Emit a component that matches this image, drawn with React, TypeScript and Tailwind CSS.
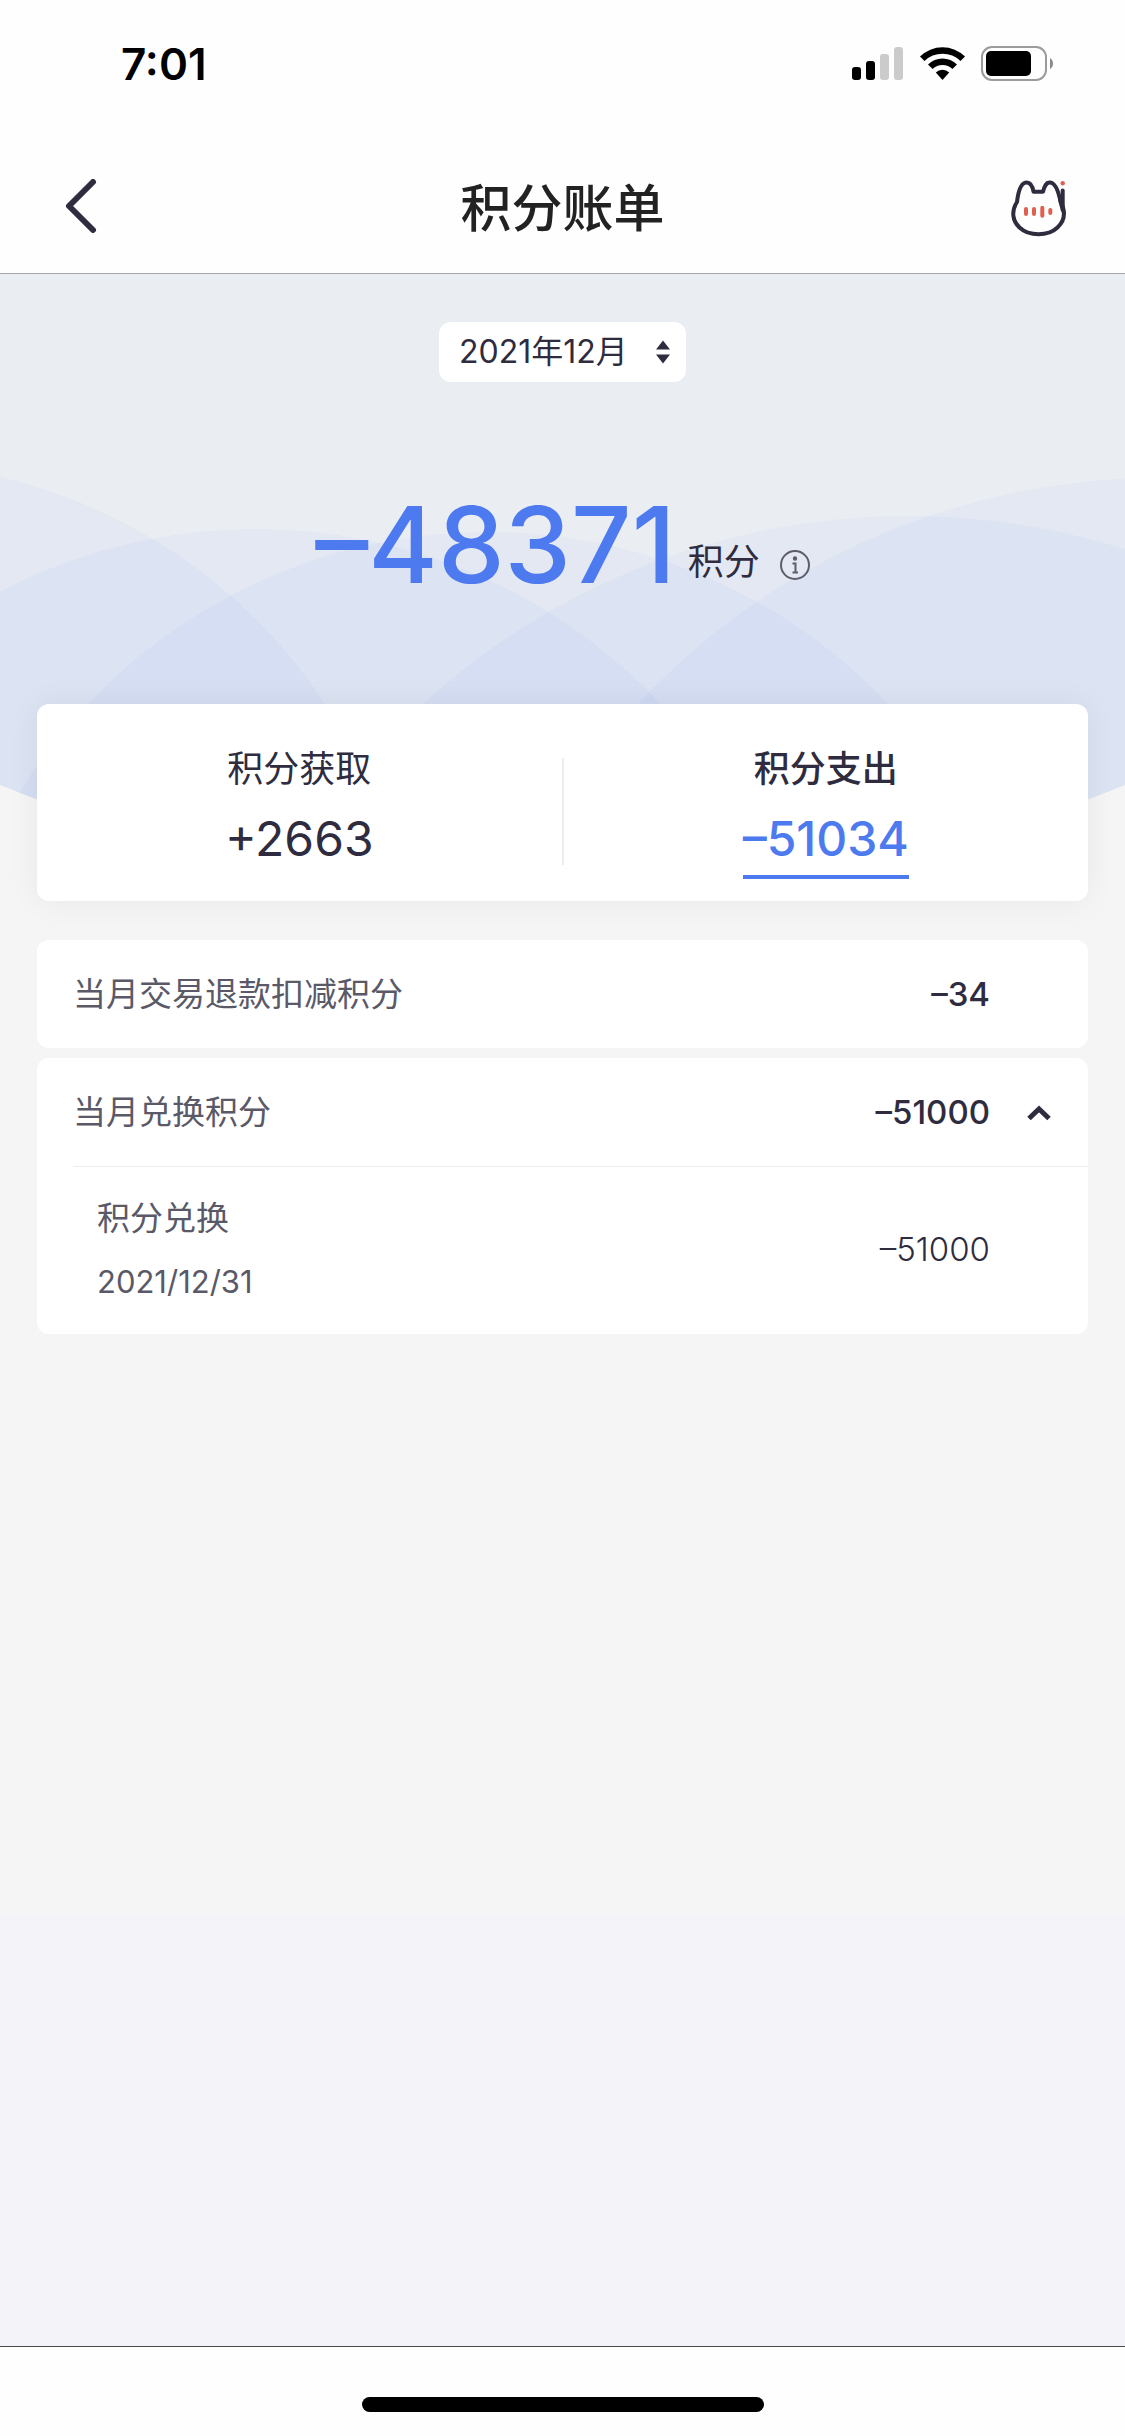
import { useState } from "react";

type Detail = {
  name: string;
  date: string;
  amount: string;
};

type Item = {
  title: string;
  amount: string;
  details: Detail[];
};

const items: Item[] = [
  {
    title: "当月交易退款扣减积分",
    amount: "–34",
    details: [],
  },
  {
    title: "当月兑换积分",
    amount: "–51000",
    details: [
      { name: "积分兑换", date: "2021/12/31", amount: "–51000" },
    ],
  },
];

const tabs = [
  { id: "earn", label: "积分获取", value: "+2663" },
  { id: "spend", label: "积分支出", value: "–51034" },
];

function StatusIcons() {
  return (
    <svg
      className="h-9 w-[202px]"
      viewBox="0 0 202 36"
      aria-hidden="true"
    >
      {/* signal */}
      <rect x="0" y="21" width="9" height="13" rx="3" />
      <rect x="14" y="15" width="9" height="19" rx="3" />
      <rect x="28" y="8" width="9" height="26" rx="3" fill="#cbcbcb" />
      <rect x="42" y="1" width="9" height="33" rx="3" fill="#cbcbcb" />

      {/* wifi */}
      <path d="M68 10.5a32 32 0 0 1 45 0l-4.5 4.6a25.5 25.5 0 0 0-36 0z" />
      <path d="M76 18.5a20.5 20.5 0 0 1 29 0l-4.6 4.6a14 14 0 0 0-19.8 0z" />
      <path d="M83.8 26.6a9.5 9.5 0 0 1 13.4 0L90.500 34z" />

      {/* battery */}
      <rect
        x="130"
        y="1"
        width="64"
        height="33"
        rx="10"
        fill="none"
        stroke="#9b9b9b"
        strokeWidth="2"
      />
      <rect x="134" y="5" width="45" height="25" rx="5" />
      <path d="M198 12q3 2 3 5.500t-3 5.500z" fill="#8a8a8a" />
    </svg>
  );
}

function CatIcon() {
  return (
    <svg
      className="h-[60px] w-[60px]"
      viewBox="0 0 60 60"
      fill="none"
      strokeLinecap="round"
      strokeLinejoin="round"
      aria-hidden="true"
    >
      <path
        d="M7 23C8.500 10 12 3.500 16.700 3.500C20.500 3.500 22.500 7 23.500 12.700H33C34.500 7 36 3.500 39.700 3.500C44.500 3.500 48 10 50.500 22.500C56 33 54.500 42 47.500 48.500C38 57.500 19 57.500 9.500 48.500C2.500 42 1 32 7 23Z"
        stroke="#2e2c3e"
        strokeWidth="4"
      />
      <path d="M52.700 11.500V31L50.500 22" stroke="#2e2c3e" strokeWidth="4" />
      <path
        d="M16 30v5M24 30v5M32.300 28.700v8M40.300 31v3"
        stroke="#e0604f"
        strokeWidth="4"
      />
      <circle cx="52.700" cy="4.200" r="2.200" fill="#e0604f" />
    </svg>
  );
}

function Waves() {
  return (
    <svg
      className="absolute inset-x-0 top-0 h-[660px] w-full"
      viewBox="0 274 1125 660"
      preserveAspectRatio="none"
      aria-hidden="true"
    >
      <clipPath id="hero">
        <path d="M0 274H1125V785Q562 1012 0 785z" />
      </clipPath>
      <g clipPath="url(#hero)">
        <rect y="274" width="1125" height="660" fill="#eaedf2" />
        <g fill="#6c94ff" fillOpacity="0.055">
          <circle cx="-122" cy="998" r="535" />
          <circle cx="256" cy="1084" r="555" />
          <circle cx="488" cy="1084" r="552" />
          <circle cx="908" cy="1236" r="720" />
          <circle cx="1159" cy="1193" r="715" />
        </g>
      </g>
    </svg>
  );
}

export default function PointsBillPage() {
  const [month, setMonth] = useState("2021年12月");
  const [tab, setTab] = useState("spend");
  const [open, setOpen] = useState(true);

  return (
    <div className="flex min-h-screen flex-col bg-[#f4f3f9] font-['Inter','Noto_Sans_CJK_SC',sans-serif] text-[#2e2c3e]">
      {/* HEADER */}

      <header className="border-b border-[#a3a5a9] bg-[#fefefe]">
        <div className="flex h-32 items-center justify-between pr-[71px] pl-[121px] text-black">
          <span className="text-[44px] font-semibold">7:01</span>
          <StatusIcons />
        </div>

        <div className="flex h-[145px] items-start justify-between px-[55px] pt-[51px]">
          <button type="button" aria-label="返回" className="h-[60px] w-[60px]">
            <svg
              className="h-[60px] w-[60px]"
              viewBox="0 0 60 60"
              fill="none"
              stroke="#2e2c3e"
              strokeWidth="6"
              strokeLinecap="round"
              strokeLinejoin="round"
            >
              <path d="M38 3L14 27l24 24" />
            </svg>
          </button>
          <h1 className="text-[51px] leading-[60px] font-medium text-[#222222]">
            积分账单
          </h1>
          <button type="button" aria-label="客服" className="h-[60px] w-[60px]">
            <CatIcon />
          </button>
        </div>
      </header>

      <main className="relative bg-[#f5f5f5] px-[37px] pb-[581px]">
        <Waves />

        <div className="relative">
          {/* MONTH */}

          <div className="flex justify-center pt-12">
            <div className="relative">
              <select
                aria-label="月份"
                value={month}
                onChange={(e) => setMonth(e.target.value)}
                className="h-[60px] appearance-none rounded-xl bg-white pr-[58px] pl-5 text-[32px]"
              >
                <option>2021年12月</option>
                <option>2021年11月</option>
              </select>
              <svg
                className="pointer-events-none absolute top-[18px] right-4 h-6 w-[14px]"
                viewBox="0 0 14 24"
                fill="#2e2c3e"
                aria-hidden="true"
              >
                <path d="M7 .5L14 9.500H0zM7 23.500L14 14.500H0z" />
              </svg>
            </div>
          </div>

          {/* TOTAL */}

          <div className="mt-[108px] flex items-end justify-center">
            <strong className="text-[106px] leading-[110px] font-medium text-[#4e7af0]">
              –48371
            </strong>
            <span className="mb-5 ml-3 text-[36px] leading-9">积分</span>
            <button type="button" aria-label="积分说明" className="mb-5 ml-5">
              <svg
                className="h-[30px] w-[30px]"
                viewBox="0 0 30 30"
                fill="none"
                stroke="#5d5c68"
                strokeWidth="2"
                aria-hidden="true"
              >
                <circle cx="15" cy="15" r="14" />
                <circle cx="15" cy="8.500" r="1.200" fill="#5d5c68" />
                <path d="M12.500 13.500H15.500V22M12.500 22.500H18" />
              </svg>
            </button>
          </div>

          {/* TABS */}

          <div className="mt-[104px] grid grid-cols-[1fr_2px_1fr] rounded-xl bg-white pt-11 pb-[22px] shadow-[0_0_32px_rgba(0,0,0,0.06)]">
            {tabs.map((t, index) => (
              <button
                key={t.id}
                type="button"
                onClick={() => setTab(t.id)}
                className={`row-start-1 flex flex-col items-center ${
                  index === 0 ? "col-start-1" : "col-start-3"
                }`}
              >
                <span
                  className={`text-[36px] leading-[42px] ${
                    tab === t.id ? "font-medium" : "font-normal"
                  }`}
                >
                  {t.label}
                </span>
                <span
                  className={`mt-5 border-b-4 pb-2 text-[48px] leading-[57px] ${
                    tab === t.id
                      ? "border-[#4e7af0] font-medium text-[#4e7af0]"
                      : "border-transparent"
                  }`}
                >
                  {t.value}
                </span>
              </button>
            ))}
            <div className="col-start-2 row-start-1 mt-[10px] h-[107px] bg-[#ededed]" />
          </div>

          {/* LIST */}

          <div className="mt-[39px] flex flex-col gap-[10px]">
            {items.map((item) => (
              <section key={item.title} className="rounded-xl bg-white">
                <div className="flex h-[108px] items-center pt-[2px] pr-[34px] pl-9">
                  <h2 className="flex-1 text-[33px] font-normal text-[#5a5967]">
                    {item.title}
                  </h2>
                  <span className="text-[33px] font-medium">
                    {item.amount}
                  </span>
                  <div className="flex w-16 justify-end">
                    {item.details.length > 0 && (
                      <button
                        type="button"
                        aria-label="展开明细"
                        aria-expanded={open}
                        onClick={() => setOpen(!open)}
                      >
                        <svg
                          className="h-[30px] w-[30px]"
                          viewBox="0 0 30 30"
                          fill="none"
                          stroke="#2e2c3e"
                          strokeWidth="5"
                          aria-hidden="true"
                        >
                          <path d="M5 20.500L15 11l10 9.500" />
                        </svg>
                      </button>
                    )}
                  </div>
                </div>

                {open &&
                  item.details.map((detail) => (
                    <div
                      key={detail.date}
                      className="ml-9 flex items-center justify-between border-t border-[#ededed] pt-[31px] pr-[98px] pb-8 pl-6"
                    >
                      <div className="text-[#5a5967]">
                        <p className="text-[33px] leading-10">{detail.name}</p>
                        <p className="mt-6 text-[31px] leading-10">
                          {detail.date}
                        </p>
                      </div>
                      <span className="text-[33px] font-light">
                        {detail.amount}
                      </span>
                    </div>
                  ))}
              </section>
            ))}
          </div>
        </div>
      </main>

      {/* HOME BAR */}

      <footer className="mt-auto flex h-[90px] justify-center border-t border-[#4a4a4a] bg-[#fefefe] pt-[50px]">
        <div className="h-[15px] w-[402px] rounded-full bg-black" />
      </footer>
    </div>
  );
}
